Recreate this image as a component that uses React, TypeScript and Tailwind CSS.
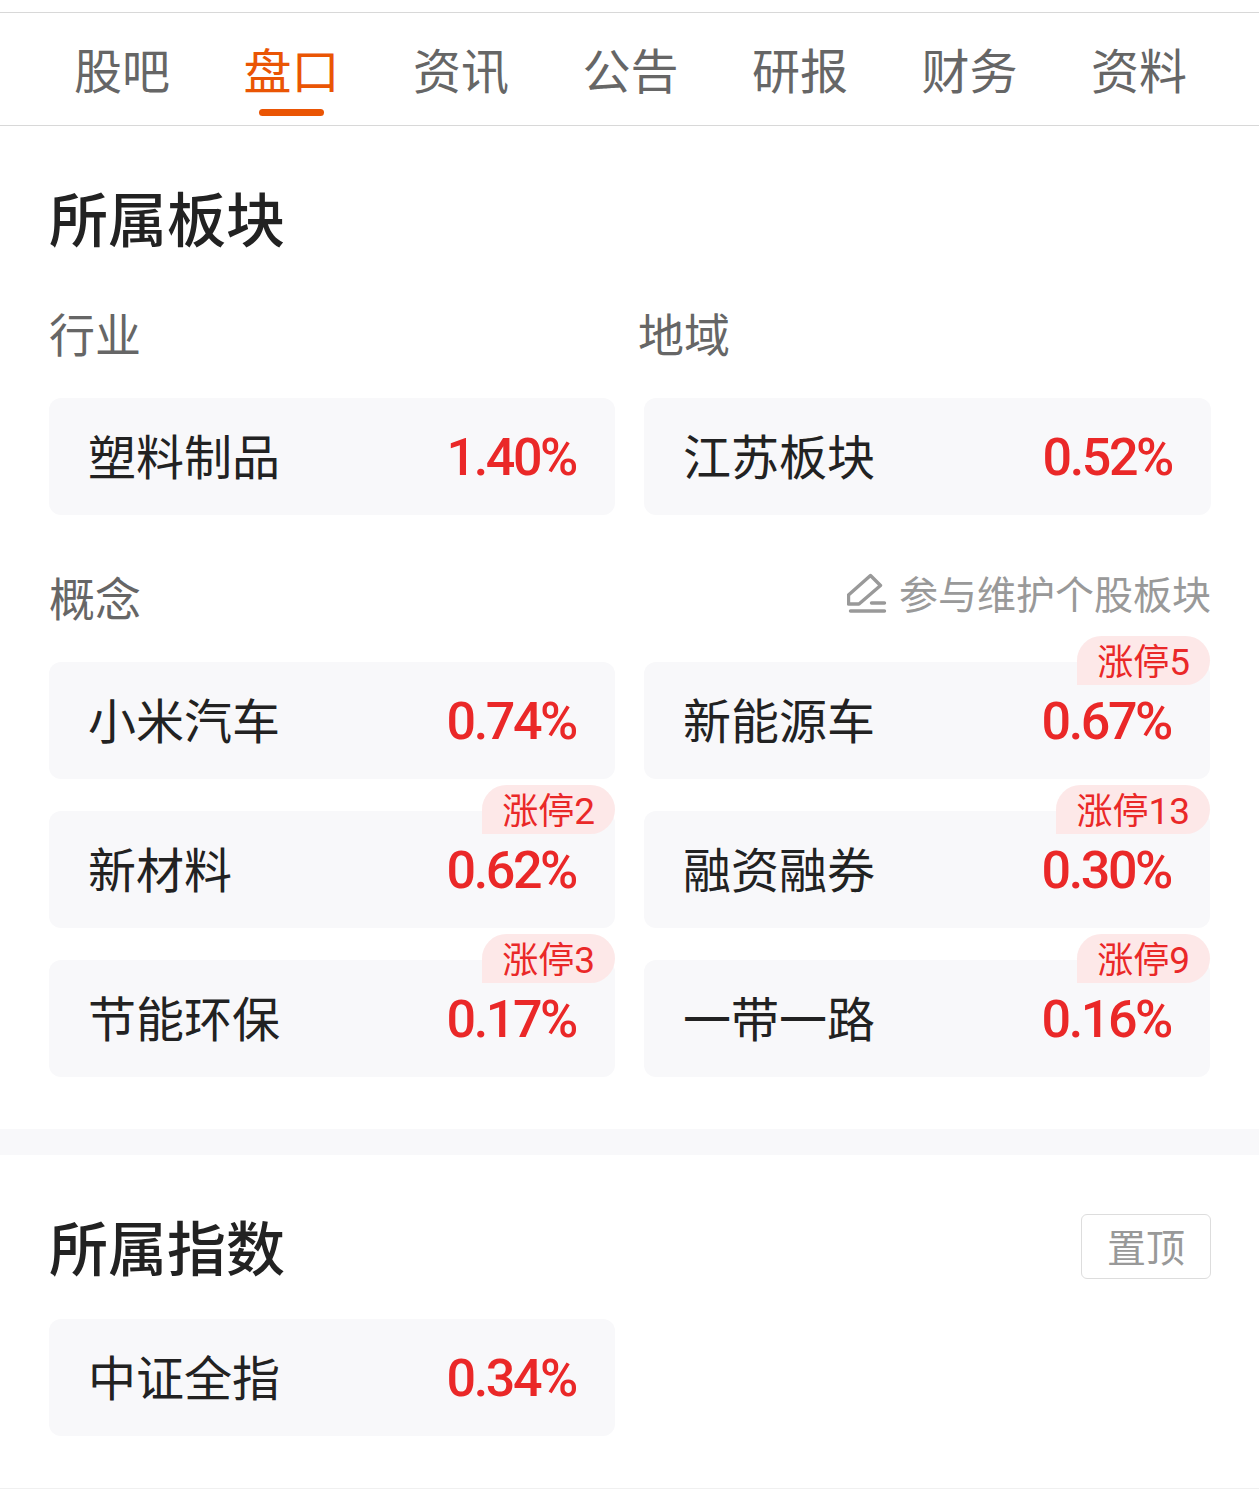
import clsx from 'clsx';

type Sector = {
  name: string;
  change: string;
  limitUp?: number;
};

const tabs = ['股吧', '盘口', '资讯', '公告', '研报', '财务', '资料'];
const activeTab = '盘口';

const concepts: Sector[] = [
  { name: '小米汽车', change: '0.74%' },
  { name: '新能源车', change: '0.67%', limitUp: 5 },
  { name: '新材料', change: '0.62%', limitUp: 2 },
  { name: '融资融券', change: '0.30%', limitUp: 13 },
  { name: '节能环保', change: '0.17%', limitUp: 3 },
  { name: '一带一路', change: '0.16%', limitUp: 9 },
];

function TabBar() {
  return (
    <nav className="mt-3 flex h-[114px] justify-between border-y border-[#d8d8d8] pr-[72px] pl-[74px]">
      {tabs.map((tab) => (
        <div
          key={tab}
          className={clsx(
            'flex flex-col items-center text-[48px] leading-[110px]',
            tab === activeTab ? 'text-[#ea5504]' : 'text-[#666]'
          )}
        >
          <span className="h-24">{tab}</span>
          {tab === activeTab && <div className="h-[7px] w-[65px] rounded-full bg-[#ea5504]" />}
        </div>
      ))}
    </nav>
  );
}

function SectorCard({ name, change, limitUp }: Sector) {
  return (
    <div className="relative flex h-[117px] items-center justify-between rounded-xl bg-[#f8f8fa] px-[39px]">
      <span className="pb-[5px] text-[48px] leading-none text-[#222]">{name}</span>
      <span className="pt-[3px] font-['Roboto',sans-serif] text-[52px] leading-none font-medium tracking-[-2.4px] text-[#ea2828]">
        {change}
      </span>
      {limitUp && (
        <div className="absolute -top-[26px] right-0 h-[49px] rounded-t-[25px] rounded-br-[25px] bg-[#fde8e8] px-5 text-[36px] leading-[47px] text-[#ea2828]">
          涨停<span className="font-['Roboto',sans-serif] text-[37px]">{limitUp}</span>
        </div>
      )}
    </div>
  );
}

function EditIcon() {
  return (
    <svg width="42" height="42" viewBox="0 0 42 42" fill="none" stroke="#999" strokeWidth="3.4">
      <path d="M1.500 31V22L23.500 2.500L33.500 12.500L12 31Z" strokeLinejoin="round" />
      <path d="M24.500 30H37.500M3.500 38H37.500" strokeLinecap="round" />
    </svg>
  );
}

export default function App() {
  return (
    <div className="flow-root h-[1489px] bg-white font-['Noto_Sans_CJK_SC',sans-serif]">
      <TabBar />
      <section className="h-[1003px] px-[49px]">
        <h2 className="pt-12 text-[59px] leading-[86px] font-medium text-[#222]">所属板块</h2>
        <div className="mt-[39px] grid grid-cols-2 gap-x-[29px] text-[46px] leading-[66px] text-[#666]">
          <h3>行业</h3>
          <h3 className="-ml-1.5">地域</h3>
        </div>
        <div className="mt-[33px] -mr-px grid grid-cols-[566px_567px] gap-x-[29px]">
          <SectorCard name="塑料制品" change="1.40%" />
          <SectorCard name="江苏板块" change="0.52%" />
        </div>
        <div className="mt-12 flex h-[66px] justify-between">
          <h3 className="text-[46px] leading-[66px] text-[#666]">概念</h3>
          <div className="-mr-px flex items-start gap-2.5 text-[39px] leading-[58px] text-[#999]">
            <div className="pt-2.5">
              <EditIcon />
            </div>
            参与维护个股板块
          </div>
        </div>
        <div className="mt-[33px] grid grid-cols-2 gap-x-[29px] gap-y-8">
          {concepts.map((item) => (
            <SectorCard key={item.name} {...item} />
          ))}
        </div>
      </section>
      <div className="h-[26px] bg-[#f8f8fa]" />
      <section className="h-[334px] border-b border-[#f0f0f0] px-[49px] pt-12">
        <div className="flex items-center justify-between">
          <h2 className="text-[59px] leading-[86px] font-medium text-[#222]">所属指数</h2>
          <button className="-mr-px h-[65px] w-[130px] rounded-md border border-[#ddd] pb-0.5 text-[39px] leading-none text-[#999]">
            置顶
          </button>
        </div>
        <div className="mt-[30px] grid grid-cols-2 gap-x-[29px]">
          <SectorCard name="中证全指" change="0.34%" />
        </div>
      </section>
    </div>
  );
}
